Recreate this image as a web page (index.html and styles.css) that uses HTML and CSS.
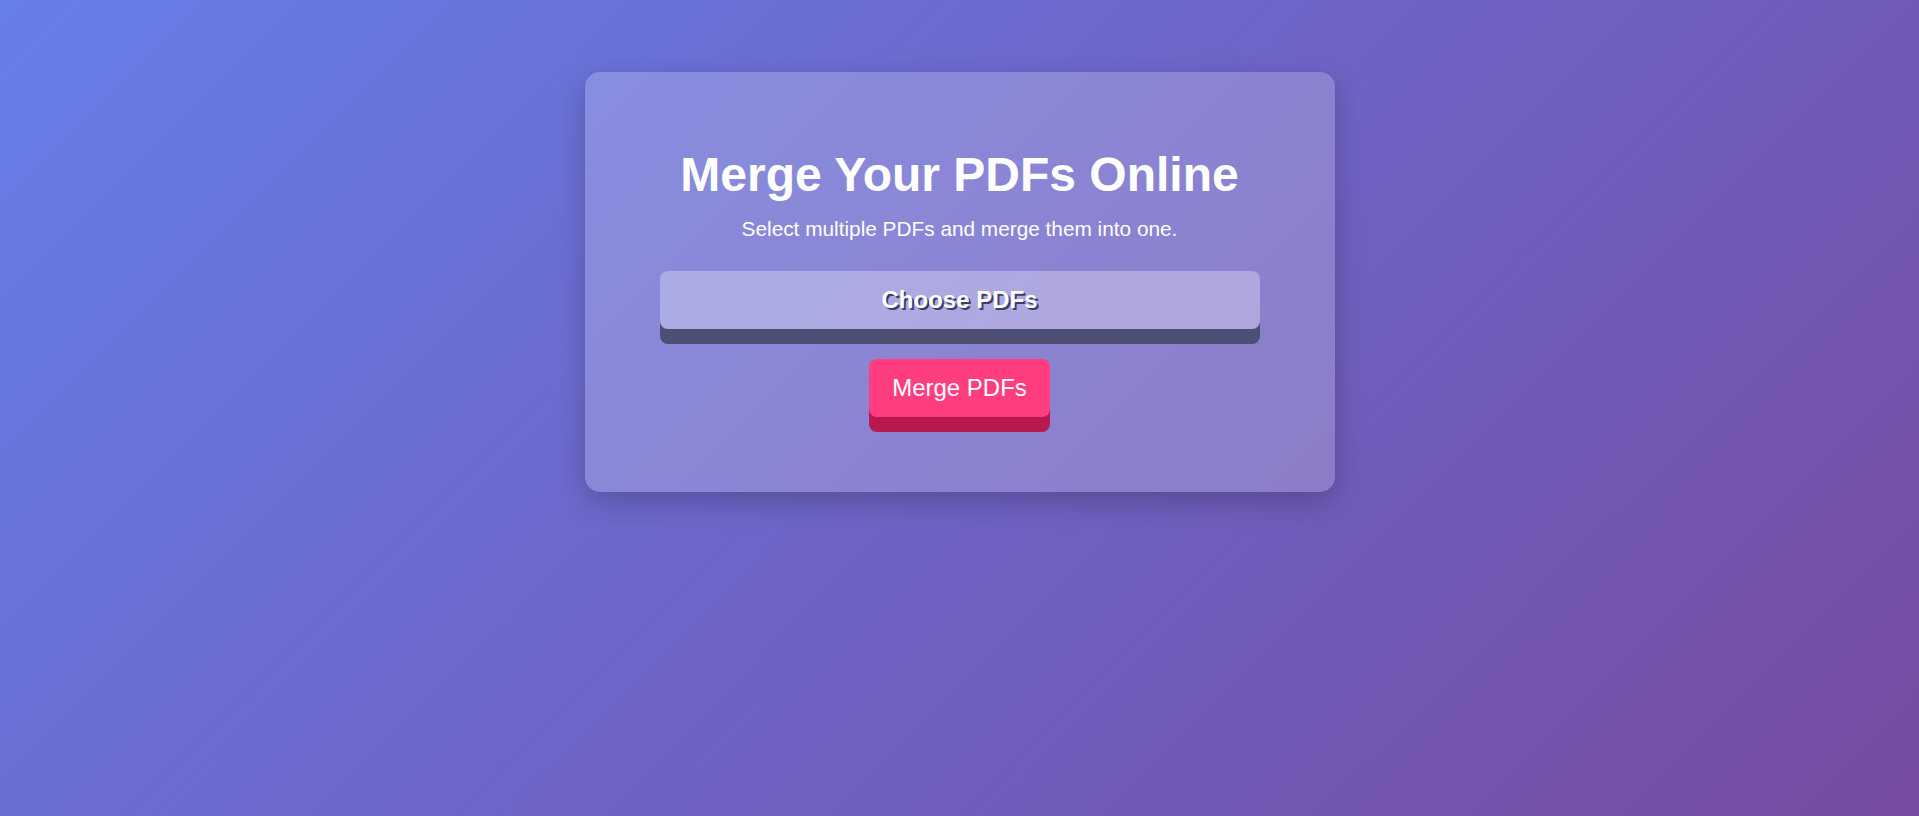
FILE: index.html
```html
<!DOCTYPE html>
<html lang="en">
<head>
<meta charset="utf-8">
<title>Merge PDFs</title>
<link rel="stylesheet" href="styles.css">
</head>
<body>
<main class="page">
  <section class="card">
    <h1 class="title">Merge Your PDFs Online</h1>
    <p class="subtitle">Select multiple PDFs and merge them into one.</p>
    <label class="choose-btn">Choose PDFs<input type="file" accept="application/pdf" multiple class="file-input"></label>
    <button class="merge-btn" type="button">Merge PDFs</button>
  </section>
</main>
</body>
</html>
```
FILE: styles.css
```css
html, body {
  margin: 0;
  padding: 0;
  height: 100%;
}
body {
  font-family: "Liberation Sans", Arial, sans-serif;
  background: linear-gradient(135deg, #667eea 0%, #764ba2 100%);
  color: #fff;
}
.page {
  display: flex;
  justify-content: center;
  padding-top: 72px;
}
.card {
  box-sizing: border-box;
  width: 750px;
  padding: 75px;
  background: rgba(255, 255, 255, 0.2);
  border-radius: 15px;
  box-shadow: 0 10px 30px rgba(0, 0, 0, 0.22);
  display: flex;
  flex-direction: column;
  align-items: center;
  text-align: center;
}
.title {
  margin: 0;
  font-size: 48px;
  font-weight: 700;
}
.subtitle {
  margin: 15px 0 30px;
  font-size: 20.8px;
}
.choose-btn {
  box-sizing: border-box;
  width: 600px;
  padding: 15px;
  background: rgba(255, 255, 255, 0.3);
  border-radius: 8px;
  box-shadow: 0 15px 0 #4e4f74;
  font-size: 24px;
  font-weight: 700;
  line-height: 28px;
  text-shadow: 2px 2px 0 #3d3c6a;
  cursor: pointer;
  margin-bottom: 30px;
}
.file-input {
  display: none;
}
.merge-btn {
  font-family: inherit;
  font-size: 24px;
  line-height: 28px;
  color: #fff;
  background: #ff3d7f;
  border: 0;
  border-radius: 8px;
  padding: 15px 23px;
  box-shadow: 0 15px 0 #b8194f;
  cursor: pointer;
}
```
